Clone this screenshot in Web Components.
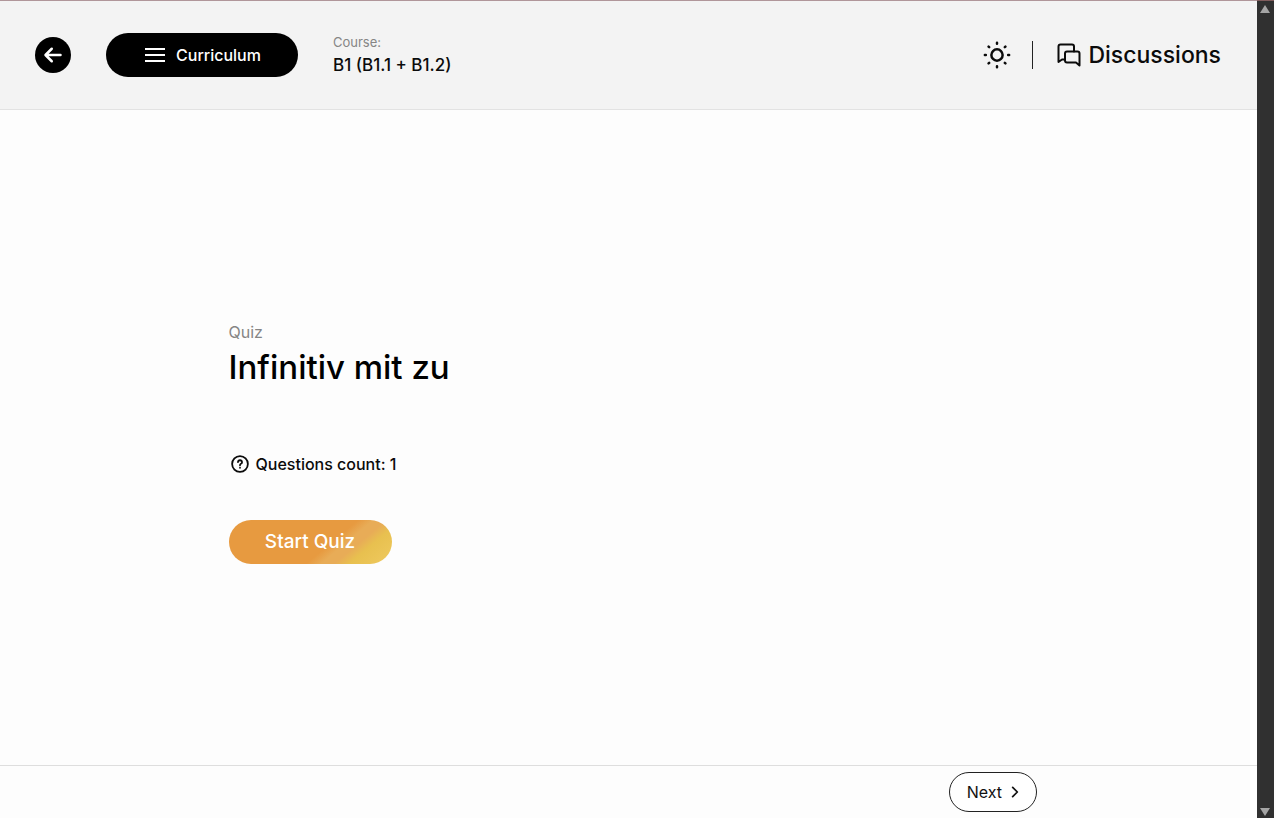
<!DOCTYPE html>
<html lang="en">
<head>
<meta charset="utf-8">
<title>Infinitiv mit zu</title>
<style>
  html, body {
    height: 100%;
    margin: 0;
  }
  body {
    overflow: hidden;
    color: #0b0b0b;
    background: #fdfdfd;
    font: 500 16px/24px Inter, "Open Sans", sans-serif;
  }
</style>
</head>
<body>
<course-player>
  <course-header slot="header" course="B1 (B1.1 + B1.2)"></course-header>
  <quiz-intro count="1">Infinitiv mit zu</quiz-intro>
  <lesson-footer slot="footer">Next</lesson-footer>
</course-player>

<script>
function define(name, styles, render) {
  customElements.define(name, class extends HTMLElement {
    constructor() {
      super();
      this.attachShadow({ mode: "open" });
    }
    connectedCallback() {
      const t = document.createElement("template");
      t.innerHTML = `<style>:host, * { box-sizing: border-box; } ${styles}</style>${render(this)}`;
      this.shadowRoot.replaceChildren(t.content.cloneNode(true));
    }
  });
}

const icons = {
  back: `<path d="M21 12H3.5M10.5 4.5L3 12L10.5 19.5" stroke-width="3"/>`,
  menu: `<path d="M2 6H22M2 12H22M2 18H22" stroke-linecap="butt"/>`,
  sun: `<g stroke-width="2.3"><circle cx="12" cy="12" r="5.2"/><path d="M12 .8V1.7M12 22.3V23.2M.8 12H1.7M22.3 12H23.2M4.2 4.2L4.8 4.8M19.2 19.2L19.8 19.8M4.2 19.8L4.8 19.2M19.2 4.8L19.8 4.2"/></g>`,
  chat: `<path d="M7.5 16.5H5L1.5 19V3.5Q1.5 1.5 3.5 1.5H15Q17 1.5 17 3.5V8.5"/><path d="M22.5 22.5L19 19.5H10Q8 19.5 8 17.5V10.5Q8 8.5 10 8.5H20.5Q22.5 8.5 22.5 10.5Z"/>`,
  help: `<circle cx="12" cy="12" r="10.5" stroke-width="2.4"/><path d="M9.3 9.6Q9.6 7 12 7T14.7 9.5Q14.7 11 13.2 11.7Q12 12.3 12 13.8M12 17V17.1" stroke-width="2.4"/>`,
  next: `<path d="M8 4L16 12L8 20" stroke-width="3"/>`
};

define("ui-icon", `
  :host { display: inline-flex; flex: none; }
  svg { display: block; width: var(--icon-size, 24px); height: var(--icon-size, 24px); overflow: visible; }
`, el => `
  <svg viewBox="0 0 24 24" fill="none" stroke="currentColor" stroke-width="2" stroke-linecap="round" stroke-linejoin="round" aria-hidden="true">${icons[el.getAttribute("name")]}</svg>
`);

define("pill-button", `
  :host { display: inline-flex; }
  button {
    display: flex;
    align-items: center;
    justify-content: center;
    gap: 9px;
    min-width: var(--pill-width);
    height: 44px;
    padding: 0 20px;
    border: 0;
    border-radius: 22px;
    color: #fff;
    background: #000;
    font: inherit;
    white-space: nowrap;
    cursor: pointer;
  }
  :host([kind="accent"]) button {
    background: linear-gradient(140deg, #e79a40 60%, #e8ac57 67%, #e8ac57 73%, #e8c04f 80%, #efca60 100%);
  }
  :host([kind="outline"]) button {
    gap: 6px;
    height: 40px;
    padding: 0 14px 0 17px;
    border: 1px solid #222;
    color: #111;
    background: #fff;
  }
  :host([kind="round"]) button {
    width: 36px;
    height: 36px;
    padding: 0;
  }
`, el => `<button type="button" aria-label="${el.getAttribute("label")}"><slot></slot></button>`);

define("course-header", `
  :host {
    display: flex;
    align-items: center;
    gap: 35px;
    height: 110px;
    padding: 0 36px 0 35px;
    border-top: 1px solid #b0969a;
    border-bottom: 1px solid #e2e2e2;
    background: #f3f3f3;
  }
  .course { flex: 1; padding-bottom: 2px; }
  .course small { display: block; color: #858585; font-size: 13px; font-weight: 400; line-height: 22px; }
  .course strong { display: block; font-size: 17px; font-weight: 500; line-height: 24px; }
  .back { --icon-size: 20px; }
  .menu { --pill-width: 192px; }
  nav { display: flex; align-items: center; gap: 22px; }
  .theme {
    --icon-size: 26px;
    display: flex;
    padding: 0;
    border: 0;
    color: inherit;
    background: none;
  }
  .rule { width: 1px; height: 28px; background: #222; }
  a {
    display: flex;
    align-items: center;
    gap: 7px;
    padding-left: 2px;
    color: inherit;
    font-size: 23px;
    line-height: 32px;
    text-decoration: none;
  }
`, el => `
  <pill-button class="back" kind="round" label="Back"><ui-icon name="back"></ui-icon></pill-button>
  <pill-button class="menu" label="Curriculum"><ui-icon name="menu"></ui-icon>Curriculum</pill-button>
  <div class="course"><small>Course:</small><strong>${el.getAttribute("course")}</strong></div>
  <nav>
    <button class="theme" type="button" aria-label="Theme"><ui-icon name="sun"></ui-icon></button>
    <span class="rule"></span>
    <a href="#discussions"><ui-icon name="chat"></ui-icon>Discussions</a>
  </nav>
`);

define("quiz-intro", `
  :host { display: block; width: 100%; max-width: 840px; padding: 0 20px; margin: auto; }
  .type { margin: 0; color: #858585; font-weight: 400; }
  h1 { margin: 0 0 62px; font-size: 33px; font-weight: 500; line-height: 46px; color: #000; }
  .count { display: flex; align-items: center; gap: 7px; margin: 0 0 44px; padding-left: 2px; --icon-size: 18px; }
  pill-button { --pill-width: 163px; font-size: 19px; }
`, el => `
  <p class="type">Quiz</p>
  <h1><slot></slot></h1>
  <p class="count"><ui-icon name="help"></ui-icon>Questions count: ${el.getAttribute("count")}</p>
  <pill-button kind="accent" label="Start Quiz">Start Quiz</pill-button>
`);

define("lesson-footer", `
  :host {
    display: flex;
    justify-content: flex-end;
    padding: 6px 220px 6px 20px;
    border-top: 1px solid #dedede;
    font-weight: 400;
  }
  pill-button { --pill-width: 88px; --icon-size: 14px; }
`, () => `<pill-button kind="outline" label="Next"><slot></slot><ui-icon name="next"></ui-icon></pill-button>`);

define("scroll-rail", `
  :host {
    display: flex;
    flex-direction: column;
    justify-content: space-between;
    align-items: center;
    padding: 4px 1px 2px 0;
    border-top: 1px solid #805c5c;
    background: #303030;
  }
  i { border: 5px solid transparent; border-top: 0; border-bottom: 8px solid #a5a5a5; }
  i + i { transform: rotate(180deg); }
`, () => `<i></i><i></i>`);

define("course-player", `
  :host { display: grid; grid-template-columns: 1fr 17px; height: 100vh; padding-right: 2px; }
  .page { display: flex; flex-direction: column; min-width: 0; }
  main { display: flex; flex: 1; padding-top: 8px; }
`, () => `
  <div class="page">
    <slot name="header"></slot>
    <main><slot></slot></main>
    <slot name="footer"></slot>
  </div>
  <scroll-rail></scroll-rail>
`);
</script>
</body>
</html>
